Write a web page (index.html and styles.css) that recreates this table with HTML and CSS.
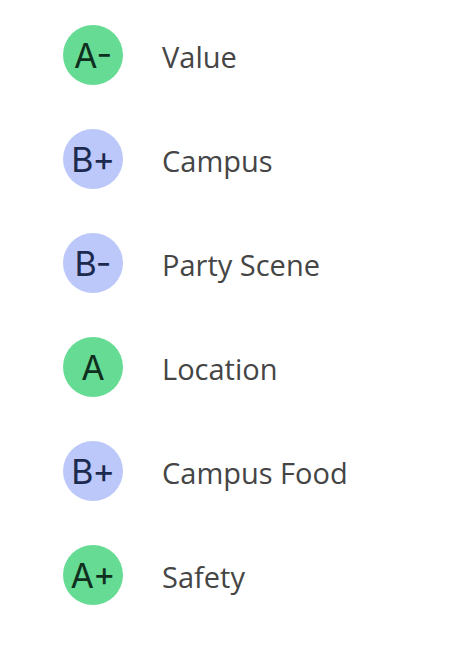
FILE: index.html
```html
<!DOCTYPE html>
<html lang="en">
<head>
<meta charset="utf-8">
<link rel="stylesheet" href="styles.css">
</head>
<body>
<ul class="grades">
  <li class="grade-row"><span class="badge badge-a"><span class="letter">A</span><span class="sign">-</span></span><span class="label">Value</span></li>
  <li class="grade-row"><span class="badge badge-b"><span class="letter">B</span><span class="sign">+</span></span><span class="label">Campus</span></li>
  <li class="grade-row"><span class="badge badge-b"><span class="letter">B</span><span class="sign">-</span></span><span class="label">Party Scene</span></li>
  <li class="grade-row"><span class="badge badge-a"><span class="letter">A</span></span><span class="label">Location</span></li>
  <li class="grade-row"><span class="badge badge-b"><span class="letter">B</span><span class="sign">+</span></span><span class="label">Campus Food</span></li>
  <li class="grade-row"><span class="badge badge-a"><span class="letter">A</span><span class="sign">+</span></span><span class="label">Safety</span></li>
</ul>
</body>
</html>
```

FILE: styles.css
```css
html, body {
  margin: 0;
  padding: 0;
  background: #ffffff;
}

.grades {
  list-style: none;
  margin: 0;
  padding: 25px 0 0 63px;
  display: flex;
  flex-direction: column;
  gap: 44px;
}

.grade-row {
  display: flex;
  align-items: center;
  gap: 39px;
  height: 60px;
}

.badge {
  flex: none;
  width: 60px;
  height: 60px;
  border-radius: 50%;
  display: flex;
  align-items: center;
  justify-content: center;
  font-family: "Inter", "DejaVu Sans", sans-serif;
  font-weight: 400;
  font-size: 34px;
  line-height: 1;
  padding-top: 1px;
  box-sizing: border-box;
}

.sign {
  display: inline-block;
  margin-left: -1px;
}

.badge-a .sign {
  transform: translateY(-2px);
}

.badge-b .sign {
  transform: translateY(-1px);
}

.badge-a {
  background: #66db93;
  color: #10301f;
}

.badge-b {
  background: #bcc8fa;
  color: #1b2a4e;
}

.label {
  font-family: "Open Sans", "Noto Sans", sans-serif;
  font-size: 29px;
  color: #454545;
  padding-top: 2px;
}
```
